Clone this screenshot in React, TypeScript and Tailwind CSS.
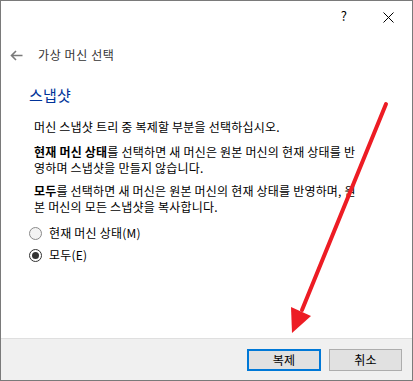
import React from 'react';

const Radio: React.FC<{ checked?: boolean; label: string }> = ({ checked, label }) => {
  return (
    <div className="flex items-center h-[16px]">
      <span
        className={
          checked
            ? 'w-[13px] h-[13px] rounded-full border border-[#333333] bg-white flex items-center justify-center'
            : 'w-[13px] h-[13px] rounded-full border border-[#8a8a8a] bg-[#f3f3f3]'
        }
      >
        {checked && <span className="w-[7px] h-[7px] rounded-full bg-[#333333]"></span>}
      </span>
      <span className="ml-[7px]">{label}</span>
    </div>
  );
};

export default function App() {
  return (
    <div className="relative w-[413px] h-[381px] border border-[#7a7a7a] bg-white flex flex-col text-[12px] leading-[16px] tracking-[0.2px] text-black font-['Noto_Sans_CJK_KR',sans-serif]">
      {/* title bar */}
      <div className="h-[32px] flex items-center justify-end shrink-0">
        <span className="text-[13px] mr-[36px] mt-[-2px]">?</span>
        <svg width="11" height="11" viewBox="0 0 11 11" className="mr-[18px]">
          <path d="M0.5 0.5 L10.5 10.5 M10.5 0.5 L0.5 10.5" stroke="#000" strokeWidth="1" />
        </svg>
      </div>

      {/* back / page title */}
      <div className="mt-[14px] h-[16px] flex items-center shrink-0">
        <svg width="13" height="11" viewBox="0 0 13 11" className="ml-[9px]">
          <path d="M12.5 5.5 H1.5 M6 1 L1.5 5.5 L6 10" stroke="#7a7a7a" strokeWidth="1.6" fill="none" />
        </svg>
        <span className="ml-[15px] text-[#333333] tracking-[0.6px]">가상 머신 선택</span>
      </div>

      {/* content */}
      <div className="mt-[22px] pl-[28px] text-[#003399] text-[15px] leading-[20px]">스냅샷</div>

      <div className="mt-[14px] pl-[33px] whitespace-nowrap">
        <p>머신 스냅샷 트리 중 복제할 부분을 선택하십시오.</p>
        <p className="mt-[9px]">
          <b>현재 머신 상태</b>를 선택하면 새 머신은 원본 머신의 현재 상태를 반
          <br />
          영하며 스냅샷을 만들지 않습니다.
        </p>
        <p className="mt-[7px]">
          <b>모두</b>를 선택하면 새 머신은 원본 머신의 현재 상태를 반영하며, 원
          <br />
          본 머신의 모든 스냅샷을 복사합니다.
        </p>
      </div>

      <div className="mt-[10px] pl-[28px] flex flex-col gap-[6px]">
        <Radio label="현재 머신 상태(M)" />
        <Radio checked label="모두(E)" />
      </div>

      {/* footer */}
      <div className="mt-auto h-[42px] shrink-0 border-t border-[#dfdfdf] bg-[#f0f0f0] flex items-center justify-end gap-[8px] pr-[10px]">
        <button className="w-[74px] h-[22px] border-2 border-[#0078d7] bg-[#e1e1e1] text-[12px] leading-none">
          복제
        </button>
        <button className="w-[73px] h-[22px] border border-[#adadad] bg-[#e1e1e1] text-[12px] leading-none">
          취소
        </button>
      </div>

      {/* red annotation arrow */}
      <svg className="absolute left-[-1px] top-[-1px] pointer-events-none" width="413" height="381" viewBox="0 0 413 381">
        <line x1="386" y1="104" x2="302" y2="310" stroke="#ed1c24" strokeWidth="4" strokeLinecap="round" />
        <polygon points="292,333 291,307 311,316" fill="#ed1c24" />
      </svg>
    </div>
  );
}
